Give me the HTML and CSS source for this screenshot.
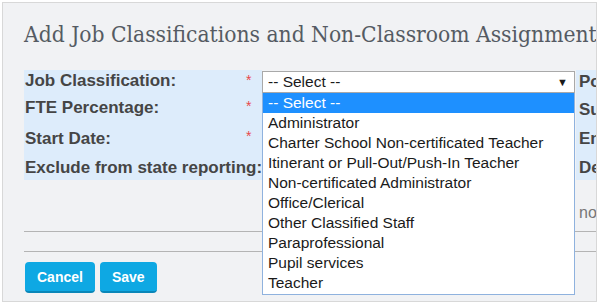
FILE: index.html
```html
<!DOCTYPE html>
<html lang="en">
<head>
  <meta charset="UTF-8">
  <title>Add Job Classifications and Non-Classroom Assignments</title>
  <link rel="stylesheet" href="styles.css">
</head>
<body>
  <div class="panel">
    <h2 class="title">Add Job Classifications and Non-Classroom Assignments</h2>

    <div class="form">
      <div class="form-left">
        <div class="row row-1">
          <span class="label">Job Classification:</span>
          <span class="req">*</span>
          <div class="control">
            <div class="select">
              <span>-- Select --</span>
              <span class="arrow">&#9660;</span>
            </div>
            <ul class="options">
              <li class="selected">-- Select --</li>
              <li>Administrator</li>
              <li>Charter School Non-certificated Teacher</li>
              <li>Itinerant or Pull-Out/Push-In Teacher</li>
              <li>Non-certificated Administrator</li>
              <li>Office/Clerical</li>
              <li>Other Classified Staff</li>
              <li>Paraprofessional</li>
              <li>Pupil services</li>
              <li>Teacher</li>
            </ul>
          </div>
        </div>
        <div class="row row-2">
          <span class="label">FTE Percentage:</span>
          <span class="req">*</span>
          <div class="control"></div>
        </div>
        <div class="row row-3">
          <span class="label">Start Date:</span>
          <span class="req">*</span>
          <div class="control"></div>
        </div>
        <div class="row row-4">
          <span class="label">Exclude from state reporting:</span>
          <span class="req"></span>
          <div class="control"></div>
        </div>
      </div>

      <div class="form-right">
        <div class="right-labels">
          <div class="row row-1"><span class="label">Position:</span></div>
          <div class="row row-2"><span class="label">Subject:</span></div>
          <div class="row row-3"><span class="label">End Date:</span></div>
          <div class="row row-4"><span class="label">Description:</span></div>
        </div>
        <div class="note">none</div>
      </div>
    </div>

    <div class="divider first"></div>
    <div class="divider"></div>

    <div class="actions">
      <button class="btn">Cancel</button>
      <button class="btn">Save</button>
    </div>
  </div>
</body>
</html>
```

FILE: styles.css
```css
body {
  margin: 0;
  background-color: #fff;
  font-family: "Liberation Sans", Arial, sans-serif;
}
.panel {
  margin: 2px;
  width: 595px;
  height: 300px;
  box-sizing: border-box;
  border: 1px solid #d8d8d8;
  background-color: #f1f2f4;
  overflow: hidden;
  position: relative;
}
.title {
  margin: 0;
  padding: 18px 0 0 21px;
  height: 51px;
  box-sizing: border-box;
  font-family: "DejaVu Serif Condensed", "DejaVu Serif", serif;
  font-stretch: condensed;
  font-weight: normal;
  font-size: 22.6px;
  line-height: 26px;
  color: #555b63;
  white-space: nowrap;
}
.form {
  display: flex;
  margin-top: 16px;
  padding-left: 21px;
}
.form-left .row {
  display: flex;
  background-color: #ddecfb;
}
.row-1 { height: 23px; }
.row-2 { height: 29px; }
.row-3 { height: 31px; }
.row-4 { height: 27px; }
.label {
  font-weight: bold;
  font-size: 17px;
  color: #454545;
  line-height: 1;
}
.form-left .label {
  width: 221px;
  padding: 2px 0 0 1px;
  white-space: nowrap;
}
.form-left .row-2 .label { padding-top: 6px; }
.form-left .row-3 .label { padding-top: 8px; }
.form-left .row-4 .label { padding-top: 6px; }
.req {
  width: 16px;
  color: #e8494b;
  font-size: 14px;
  padding-top: 2px;
}
.form-left .row-2 .req { padding-top: 5px; }
.form-left .row-3 .req { padding-top: 6px; }
.control {
  width: 313px;
  background-color: #f1f2f4;
  position: relative;
}
.select {
  height: 22px;
  box-sizing: border-box;
  border: 1px solid #a9a9a9;
  background-color: #fff;
  display: flex;
  justify-content: space-between;
  align-items: center;
  padding: 0 6px 0 5px;
  font-size: 15.5px;
  color: #1a1a1a;
  margin-top: 1px;
}
.arrow {
  font-size: 11px;
  color: #1a1a1a;
}
.options {
  position: absolute;
  top: 23px;
  left: 0;
  width: 313px;
  box-sizing: border-box;
  margin: 0;
  padding: 0 0 1px 0;
  list-style: none;
  background-color: #fff;
  border: 1px solid #8fb2de;
  border-top: none;
  z-index: 2;
}
.options li {
  height: 20px;
  line-height: 20px;
  padding-left: 5px;
  font-size: 15.5px;
  color: #1a1a1a;
  white-space: nowrap;
}
.options li.selected {
  background-color: #1e90ff;
  color: #fff;
}
.form-right {
  margin-left: 1px;
  width: 40px;
}
.right-labels .row {
  background-color: #ddecfb;
  padding-left: 3px;
  white-space: nowrap;
}
.right-labels .label { display: block; }
.right-labels .row-1 .label { padding-top: 3px; }
.right-labels .row-2 .label { padding-top: 8px; }
.right-labels .row-3 .label { padding-top: 8px; }
.right-labels .row-4 .label { padding-top: 6px; }
.note {
  padding: 24px 0 0 3px;
  font-size: 16px;
  line-height: 18px;
  color: #777;
  white-space: nowrap;
}
.divider {
  margin-left: 21px;
  border-top: 1px solid #b4b4b4;
  height: 19px;
}
.divider.first {
  margin-top: 9px;
}
.actions {
  display: flex;
  gap: 5px;
  margin-top: -9px;
  padding-left: 22px;
}
.btn {
  font-family: "Liberation Sans", Arial, sans-serif;
  font-weight: bold;
  font-size: 14px;
  color: #fff;
  background-color: #0ea8e3;
  border: none;
  border-bottom: 2px solid #0a86b8;
  border-radius: 4px;
  height: 31px;
  padding: 0 12px;
}
```
